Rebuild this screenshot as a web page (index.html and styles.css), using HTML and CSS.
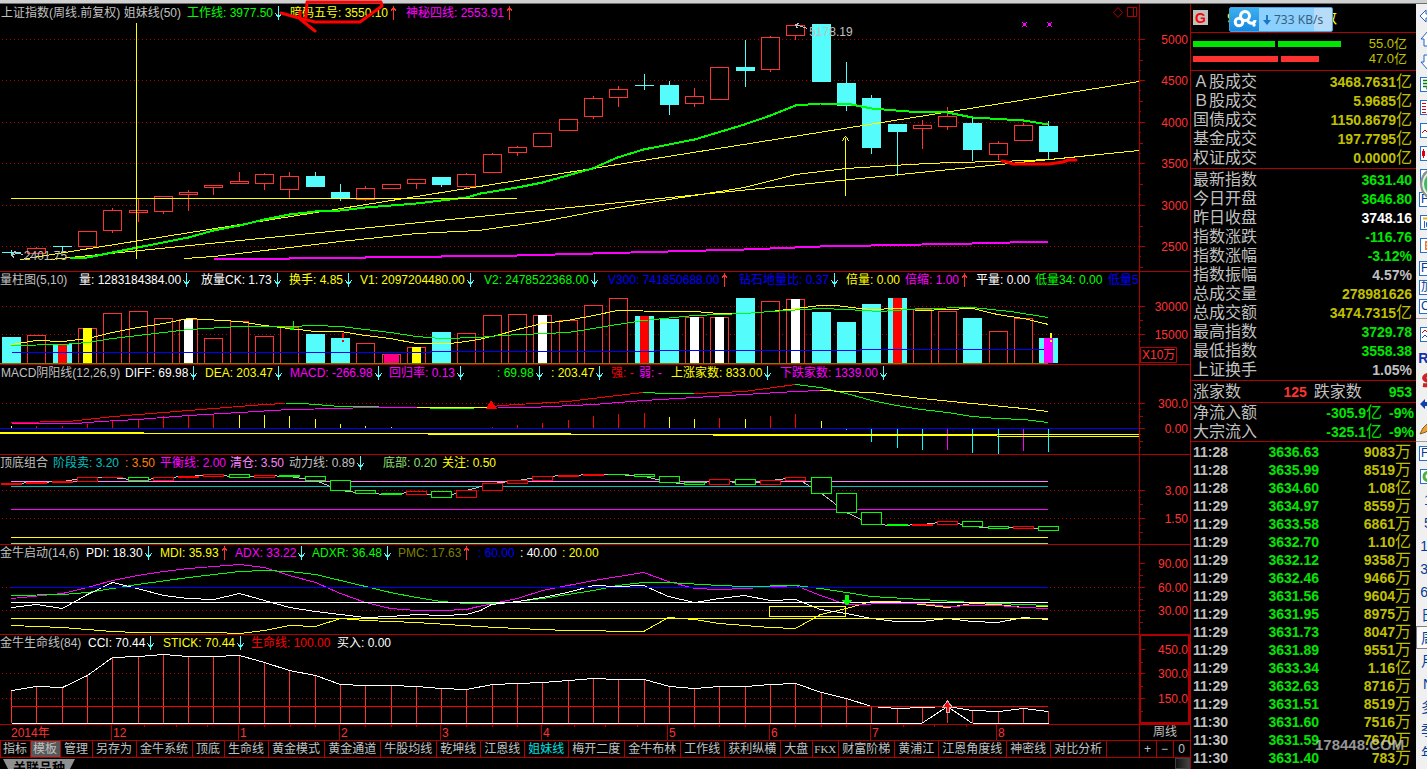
FILE: index.html
```html
<!DOCTYPE html>
<html lang="zh-CN">
<head>
<meta charset="utf-8">
<title>上证指数 周线</title>
<link rel="stylesheet" href="styles.css">
</head>
<body>
<svg class="defs" aria-hidden="true">
  <symbol id="down" viewBox="0 0 7 14"><path d="M3.5 0V14M.5 7.500l3 4.500l3-4.500M2 9.500h3" fill="none" stroke="#54fcfc"/></symbol>
  <symbol id="up" viewBox="0 0 7 14"><path d="M3.500 0V14M.5 5.500l3-4.500l3 4.500M2 3.500h3" fill="none" stroke="#ff3232"/></symbol>
</svg>
<div class="strip"></div>
<div class="app">
  <main class="charts">
    <section class="panel price">
      <header class="legend l1">
        <span class="gray">上证指数(周线.前复权) 姐妹线(50)</span>
        <span class="green">工作线: 3977.50<svg class="arr"><use href="#down"/></svg></span>
        <span class="yellow">暗码五号: 3550.10<svg class="arr"><use href="#up"/></svg></span>
        <span class="magenta">神秘四线: 2553.91<svg class="arr"><use href="#up"/></svg></span>
      </header>
      <svg class="plot" id="p1" viewBox="0 22 1139 249" preserveAspectRatio="none"></svg>
      <svg class="axis" id="a1" viewBox="1139 4 51 267"></svg>
      <span class="mark low">2401.75</span>
      <span class="mark high">5178.19</span>
      <svg class="tools" viewBox="0 0 26 16"><path d="M5 3.500L9.500 8.500L5 13.500L.5 8.500Z" shape-rendering="auto"/><path d="M14.500 3.500h9v9h-9zM20.500 3.500v9"/></svg>
      <svg class="scribble" viewBox="0 0 1139 180" preserveAspectRatio="none"><path d="M306 17L307 2H381L382 6L360 22H315L299 18L281 13M300 12V19L315 31M1002 161L1007 162L1013 164H1049L1063 162L1068 160L1076 160"/></svg>
    </section>

    <section class="panel volume">
      <header class="legend l2">
        <span class="gray">量柱图(5,10)</span>
        <span class="white">量: 1283184384.00<svg class="arr"><use href="#down"/></svg></span>
        <span class="white">放量CK: 1.73<svg class="arr"><use href="#down"/></svg></span>
        <span class="yellow">换手: 4.85<svg class="arr"><use href="#down"/></svg></span>
        <span class="yellow">V1: 2097204480.00<svg class="arr"><use href="#down"/></svg></span>
        <span class="green">V2: 2478522368.00<svg class="arr"><use href="#down"/></svg></span>
        <span class="blue">V300: 741850688.00<svg class="arr"><use href="#up"/></svg></span>
        <span class="blue">钻石地量比: 0.37<svg class="arr"><use href="#down"/></svg></span>
        <span class="yellow">倍量: 0.00</span>
        <span class="magenta">倍缩: 1.00<svg class="arr"><use href="#up"/></svg></span>
        <span class="white">平量: 0.00</span>
        <span class="green">低量34: 0.00</span>
        <span class="blue">低量5</span>
      </header>
      <svg class="plot" id="p2" viewBox="0 290 1139 74" preserveAspectRatio="none"></svg>
      <svg class="axis" id="a2" viewBox="1139 272 51 92"></svg>
    </section>

    <section class="panel">
      <header class="legend l3">
        <span class="gray">MACD阴阳线(12,26,9)</span>
        <span class="white">DIFF: 69.98<svg class="arr"><use href="#down"/></svg></span>
        <span class="yellow">DEA: 203.47<svg class="arr"><use href="#down"/></svg></span>
        <span class="magenta">MACD: -266.98<svg class="arr"><use href="#down"/></svg></span>
        <span class="magenta">回归率: 0.13<svg class="arr"><use href="#down"/></svg></span>
        <span class="green">: 69.98<svg class="arr"><use href="#down"/></svg></span>
        <span class="yellow">: 203.47<svg class="arr"><use href="#down"/></svg></span>
        <span class="red">强: -</span>
        <span class="magenta">弱: -</span>
        <span class="yellow">上涨家数: 833.00<svg class="arr"><use href="#down"/></svg></span>
        <span class="magenta">下跌家数: 1339.00<svg class="arr"><use href="#down"/></svg></span>
      </header>
      <svg class="plot" id="p3" viewBox="0 383 1139 71" preserveAspectRatio="none"></svg>
      <svg class="axis" id="a3" viewBox="1139 365 51 89"></svg>
    </section>

    <section class="panel">
      <header class="legend l4">
        <span class="gray">顶底组合</span>
        <span class="teal">阶段卖: 3.20</span>
        <span class="orange">: 3.50</span>
        <span class="magenta">平衡线: 2.00</span>
        <span class="pink">清仓: 3.50</span>
        <span class="gray">动力线: 0.89<svg class="arr"><use href="#down"/></svg></span>
        <span class="lime">底部: 0.20</span>
        <span class="yellow">关注: 0.50</span>
      </header>
      <svg class="plot" id="p4" viewBox="0 473 1139 71" preserveAspectRatio="none"></svg>
      <svg class="axis" id="a4" viewBox="1139 455 51 89"></svg>
    </section>

    <section class="panel">
      <header class="legend l5">
        <span class="gray">金牛启动(14,6)</span>
        <span class="white">PDI: 18.30<svg class="arr"><use href="#down"/></svg></span>
        <span class="yellow">MDI: 35.93<svg class="arr"><use href="#up"/></svg></span>
        <span class="magenta">ADX: 33.22<svg class="arr"><use href="#down"/></svg></span>
        <span class="green">ADXR: 36.48<svg class="arr"><use href="#down"/></svg></span>
        <span class="olive">PMC: 17.63<svg class="arr"><use href="#up"/></svg></span>
        <span class="blue">: 60.00</span>
        <span class="white">: 40.00</span>
        <span class="yellow">: 20.00</span>
      </header>
      <svg class="plot" id="p5" viewBox="0 563 1139 71" preserveAspectRatio="none"></svg>
      <svg class="axis" id="a5" viewBox="1139 545 51 89"></svg>
    </section>

    <section class="panel">
      <header class="legend l6">
        <span class="gray">金牛生命线(84)</span>
        <span class="white">CCI: 70.44<svg class="arr"><use href="#down"/></svg></span>
        <span class="yellow">STICK: 70.44<svg class="arr"><use href="#down"/></svg></span>
        <span class="red">生命线: 100.00</span>
        <span class="white">买入: 0.00</span>
      </header>
      <svg class="plot" id="p6" viewBox="0 653 1139 71" preserveAspectRatio="none"></svg>
      <svg class="axis" id="a6" viewBox="1139 635 51 89"></svg>
    </section>

    <div class="dates">
      <svg class="dateline" id="dates"></svg>
      <span class="period">周线</span>
    </div>

    <nav class="tabs">
      <button class="edge">指标</button><button class="on edge">模板</button><button>管理</button><button>另存为</button><button>金牛系统</button><button>顶底</button><button>生命线</button><button>黄金模式</button><button>黄金通道</button><button>牛股均线</button><button>乾坤线</button><button>江恩线</button><button class="current">姐妹线</button><button>梅开二度</button><button>金牛布林</button><button>工作线</button><button>获利纵横</button><button>大盘</button><button class="serif">FKX</button><button>财富阶梯</button><button>黄浦江</button><button>江恩角度线</button><button>神密线</button><button>对比分析</button>
      <span class="zoomers"><button>+</button><button>−</button><button>0</button></span>
    </nav>
    <div class="footer"><span class="related">关联品种</span><span class="thumb"></span></div>
  </main>

  <aside class="quote">
    <div class="title"><b class="g">G</b><span class="name">999999上证指数</span>
      <div class="speed">
        <span class="cloud"><svg viewBox="0 0 29 22"><g fill="none" stroke="#fff" stroke-width="3"><circle cx="15" cy="8" r="4.500"/><circle cx="9" cy="14" r="3.800"/><path d="M17 11c2 6 8 5 8 1"/></g><circle cx="24" cy="17" r="1.700" fill="#fff"/></svg></span>
        <svg class="dl" viewBox="0 0 8 10"><path d="M3 0h2v5h3L4 10L0 5h3z" fill="#1878c0"/></svg>733 KB/s
      </div>
    </div>
    <div class="bars">
      <div><i class="buy" style="width:82px"></i><i class="buy" style="width:63px"></i><span>55.0亿</span></div>
      <div><i class="sell" style="width:85px"></i><i class="sell" style="width:38px"></i><span>47.0亿</span></div>
    </div>
    <table class="stats amber">
      <tr><th>Ａ股成交</th><td>3468.7631<span>亿</span></td></tr>
      <tr><th>Ｂ股成交</th><td>5.9685<span>亿</span></td></tr>
      <tr><th>国债成交</th><td>1150.8679<span>亿</span></td></tr>
      <tr><th>基金成交</th><td>197.7795<span>亿</span></td></tr>
      <tr><th>权证成交</th><td>0.0000<span>亿</span></td></tr>
    </table>
    <table class="stats">
      <tr><th>最新指数</th><td class="dn">3631.40</td></tr>
      <tr><th>今日开盘</th><td class="dn">3646.80</td></tr>
      <tr><th>昨日收盘</th><td class="white">3748.16</td></tr>
      <tr><th>指数涨跌</th><td class="dn">-116.76</td></tr>
      <tr><th>指数涨幅</th><td class="dn">-3.12%</td></tr>
      <tr><th>指数振幅</th><td class="gray">4.57%</td></tr>
      <tr><th>总成交量</th><td class="am">278981626</td></tr>
      <tr><th>总成交额</th><td class="am">3474.7315<span>亿</span></td></tr>
      <tr><th>最高指数</th><td class="dn">3729.78</td></tr>
      <tr><th>最低指数</th><td class="dn">3558.38</td></tr>
      <tr><th>上证换手</th><td class="gray">1.05%</td></tr>
    </table>
    <table class="stats breadth">
      <tr><th>涨家数</th><td class="rise">125</td><th>跌家数</th><td class="dn">953</td></tr>
    </table>
    <table class="stats flow">
      <tr><th>净流入额</th><td class="dn">-305.9<span>亿</span></td><td class="dn pct">-9%</td></tr>
      <tr><th>大宗流入</th><td class="dn">-325.1<span>亿</span></td><td class="dn pct">-9%</td></tr>
    </table>
    <table class="ticks">
      <tr><td>11:28</td><td>3636.63</td><td>9083<span>万</span></td></tr>
      <tr><td>11:28</td><td>3635.99</td><td>8519<span>万</span></td></tr>
      <tr><td>11:28</td><td>3634.60</td><td>1.08<span>亿</span></td></tr>
      <tr><td>11:29</td><td>3634.97</td><td>8559<span>万</span></td></tr>
      <tr><td>11:29</td><td>3633.58</td><td>6861<span>万</span></td></tr>
      <tr><td>11:29</td><td>3632.70</td><td>1.10<span>亿</span></td></tr>
      <tr><td>11:29</td><td>3632.12</td><td>9358<span>万</span></td></tr>
      <tr><td>11:29</td><td>3632.46</td><td>9466<span>万</span></td></tr>
      <tr><td>11:29</td><td>3631.56</td><td>9604<span>万</span></td></tr>
      <tr><td>11:29</td><td>3631.95</td><td>8975<span>万</span></td></tr>
      <tr><td>11:29</td><td>3631.73</td><td>8047<span>万</span></td></tr>
      <tr><td>11:29</td><td>3631.89</td><td>9551<span>万</span></td></tr>
      <tr><td>11:29</td><td>3633.34</td><td>1.16<span>亿</span></td></tr>
      <tr><td>11:29</td><td>3632.63</td><td>8716<span>万</span></td></tr>
      <tr><td>11:29</td><td>3631.51</td><td>8519<span>万</span></td></tr>
      <tr><td>11:30</td><td>3631.60</td><td>7516<span>万</span></td></tr>
      <tr><td>11:30</td><td>3631.59</td><td>7670<span>万</span></td></tr>
      <tr><td>11:30</td><td>3631.40</td><td>783<span>万</span></td></tr>
    </table>
    <div class="site">178448.COM</div>
  </aside>

  <nav class="toolbar">
    <button aria-label="后退"><svg viewBox="0 0 18 18"><path d="M1 9L7 3V7H17V11H7V15Z" fill="#fff" stroke="#2060d0"/></svg></button>
    <button aria-label="上"><svg viewBox="0 0 18 18"><path d="M9 1L2 9H5V16H13V9H16Z" fill="#fff" stroke="#2060d0"/></svg></button>
    <button aria-label="下"><svg viewBox="0 0 18 18"><path d="M9 17L2 9H5V2H13V9H16Z" fill="#fff" stroke="#2060d0"/></svg></button>
    <button aria-label="列表"><svg class="box" viewBox="0 0 15 13"><path d="M2 2.500h4M2 5.500h4M2 8.500h4M8 2.500h4M8 5.500h4" stroke="#008000" stroke-width="1.500"/><circle cx="8" cy="10" r="2.500" fill="none" stroke="#777"/></svg></button>
    <button aria-label="报价"><svg class="box" viewBox="0 0 15 13"><path d="M1 2.500h4M1 5.500h4M1 8.500h4M1 11.500h4" stroke="#e00000"/><path d="M6 2.500h5M6 5.500h5M6 8.500h5M6 11.500h5" stroke="#008000"/></svg></button>
    <button aria-label="分时"><svg class="box" viewBox="0 0 15 13"><path d="M1 9L4 6L7 9L12 3" fill="none" stroke="#d00000"/></svg></button>
    <button aria-label="K线"><svg class="box" viewBox="0 0 15 13"><path d="M1 4h3v5H1zM2 2h1v9h-1z" fill="#e00000"/><path d="M6 3h4v8H6z" fill="#008000"/></svg></button>
    <button aria-label="信息"><svg class="box" viewBox="0 0 15 13"><path d="M3 3h8v7H3z" fill="none" stroke="#2060d0"/></svg></button>
    <button class="boxed">F10</button>
    <button aria-label="版面"><svg class="box" viewBox="0 0 15 13"><path d="M2 2.500h9" stroke="#f0b000" stroke-width="2"/><path d="M3.500 5v7M5.500 6.500h6v4h-6z" fill="none" stroke="#2060d0"/></svg></button>
    <button aria-label="资讯"><svg class="box" viewBox="0 0 15 13"><path d="M4 2h8v9H4z" fill="#f07830"/><path d="M5 5h6M5 8h6" stroke="#fff"/></svg></button>
    <button class="boxed">Fn</button>
    <button class="boxed">加</button>
    <button class="boxed">C</button>
    <hr>
    <button aria-label="走势"><svg class="box" viewBox="0 0 15 13"><path d="M1 5l3-3l3 3l3-3" fill="none" stroke="#d00000"/><path d="M1 10l3-3l3 3l3-3" fill="none" stroke="#2040d0"/></svg></button>
    <button class="rs">RS</button>
    <button aria-label="标记"><svg viewBox="0 0 18 18"><path d="M15 2C5 2 2 7 9 9C14 11 10 14 4 13" fill="none" stroke="#d02020" stroke-width="4"/></svg></button>
    <button aria-label="移动"><svg viewBox="0 0 18 18"><path d="M1 9L6 4V7H9V3H13V15H9V11H6V14Z" fill="#1040b0"/></svg></button>
    <button aria-label="画线"><svg viewBox="0 0 18 18"><path d="M1 16L4 10L13 1L16 5L7 14Z" fill="#f0a030" stroke="#806020"/></svg></button>
    <hr>
    <button class="boxed">F</button>
    <button aria-label="刷新"><svg class="box" viewBox="0 0 15 13"><circle cx="7" cy="6.500" r="4" fill="none" stroke="#50b040" stroke-width="3"/></svg></button>
    <button>1</button><button>5</button><button>15</button><button>30</button><button>60</button><button>日</button><button class="sel">周</button><button>月</button><button>N</button><button>多</button><button>季</button><button>年</button>
    <span class="ball"></span>
  </nav>
</div>
<script src="chart.js"></script>
</body>
</html>
```
FILE: styles.css
```css
* { box-sizing: border-box; }
body {
  margin: 0;
  height: 100vh;
  overflow: hidden;
  background: #000;
  color: #c0c0c0;
  font: 12px/18px "Liberation Sans", "Noto Sans CJK SC", sans-serif;
}
button { font: inherit; color: inherit; background: none; border: 0; padding: 0; margin: 0; }
.defs { position: absolute; width: 0; height: 0; }
.strip { height: 4px; background: #d0d0d0; border-bottom: 1px solid #707070; }
.app { display: flex; height: calc(100vh - 4px); }

.charts { flex: 1; min-width: 0; display: flex; flex-direction: column; }
.panel {
  position: relative;
  flex: none;
  display: grid;
  grid-template-columns: minmax(0, 1fr) 51px;
  grid-template-rows: 18px auto;
  border-top: 1px solid #b00000;
}
.panel.price { border-top: 0; }
.legend { display: grid; white-space: nowrap; overflow: hidden; line-height: 16px; }
.price .legend { line-height: 18px; }
.legend span { min-width: 0; }
.l1 { grid-template-columns: 186px 103px 116px 1fr; padding-left: 1px; }
.l2 { grid-template-columns: 79px 122px 88px 71px 124px 124px 131px 107px 59px 71px 59px 73px 1fr; }
.l3 { grid-template-columns: 124px 80px 85px 99px 108px 54px 60px 28px 32px 109px 1fr; padding-left: 1px; }
.l4 { grid-template-columns: 53px 72px 35px 70px 59px 94px 59px 1fr; }
.l5 { grid-template-columns: 86px 74px 75px 77px 86px 80px 42px 42px 1fr; }
.l6 { grid-template-columns: 88px 75px 88px 86px 1fr; }
.arr { width: 7px; height: 14px; margin: 0 0 0 2px; vertical-align: -3px; shape-rendering: crispEdges; }
.plot { grid-column: 1; grid-row: 2; display: block; width: 100%; height: 71px; shape-rendering: crispEdges; }
.price .plot { height: 249px; }
.volume .plot { height: 74px; }
.axis { grid-column: 2; grid-row: 1 / 3; width: 51px; height: 100%; display: block; shape-rendering: crispEdges; }
.axis text, .dateline text { font: 12px "Liberation Sans", "Noto Sans CJK SC", sans-serif; fill: #ff3232; }
.mark { position: absolute; line-height: 14px; }
.mark.low { left: 2%; top: 245px; }
.mark.high { left: 68%; top: 21px; }
.tools { position: absolute; right: 51px; top: 0; width: 26px; height: 16px; fill: none; stroke: #b00000; shape-rendering: crispEdges; }
.scribble { position: absolute; left: 0; top: -4px; width: calc(100% - 51px); height: 180px; fill: none; stroke: #ff0000; stroke-width: 3; stroke-linejoin: round; stroke-linecap: round; }

.gray { color: #c0c0c0; }
.white { color: #fff; }
.green { color: #00ff00; }
.yellow { color: #ffff00; }
.magenta { color: #ff00ff; }
.blue { color: #0000ff; }
.red { color: #ff0000; }
.teal { color: #00c0c0; }
.orange { color: #ff8000; }
.pink { color: #ff80ff; }
.lime { color: #90e070; }
.olive { color: #808000; }

.dates { display: flex; height: 16px; flex: none; border-top: 1px solid #b00000; }
.dateline { flex: 1; min-width: 0; height: 15px; shape-rendering: crispEdges; }
.period { width: 51px; border-left: 1px solid #b00000; text-align: center; line-height: 15px; }

.tabs { display: flex; flex: none; height: 18px; border: 1px solid #b00000; border-right: 0; line-height: 16px; overflow: hidden; }
.tabs button { flex: none; border-right: 1px solid #b00000; padding: 0 4px 0 3px; white-space: nowrap; }
.tabs .edge { padding: 0 3px 0 2px; }
.tabs .on { background: #585858; }
.tabs .current { color: #00e0e0; }
.tabs .serif { font-family: "Liberation Serif", serif; font-size: 11px; padding: 0 2px 0 1px; }
.zoomers { display: flex; margin-left: auto; width: 51px; border-left: 1px solid #b00000; }
.zoomers button { flex: 1; }
.zoomers button:last-child { border-right: 0; }
.footer { display: flex; justify-content: space-between; flex: 1; overflow: hidden; }
.related {
  width: 72px; height: 20px; margin: 1px 0 0 3px; text-align: center;
  background: #909090; color: #000; font-size: 13px; font-weight: bold; line-height: 18px;
  clip-path: polygon(0 0, 100% 0, 86% 100%, 14% 100%);
}
.thumb { width: 15px; border: 1px solid #404040; background: linear-gradient(90deg, #111, #444); }

.quote { position: relative; width: 226px; flex: none; border-left: 1px solid #b00000; }
.title { position: relative; display: flex; height: 29px; border-bottom: 1px solid #b00000; padding: 6px 0 0 2px; }
.g { width: 15px; height: 15px; background: #c0c0c0; color: #f00; font: bold 14px/16px "Liberation Sans", sans-serif; text-align: center; }
.name { margin-left: 19px; font-size: 15px; line-height: 16px; color: #ffff00; white-space: nowrap; }
.speed {
  position: absolute; left: 38px; top: 3px; width: 104px; height: 25px; display: flex; align-items: center;
  border: 1px solid #4aa0e0; border-radius: 2px; background: linear-gradient(90deg, #8cd0ff 82%, #b8dcf8 82%);
  color: #3a6078; font: 12px/22px "Noto Sans", sans-serif; white-space: nowrap;
}
.cloud { width: 29px; height: 100%; background: linear-gradient(#3cb0f0, #1888e0); }
.cloud svg { width: 29px; height: 22px; }
.dl { width: 8px; height: 10px; margin: 0 3px 0 4px; }
.bars { height: 38px; border-bottom: 1px solid #b00000; padding: 3px 9px 0 2px; font-size: 13px; color: #c0c000; }
.bars div { display: flex; gap: 3px; align-items: center; height: 15px; }
.bars i { height: 6px; }
.bars span { margin-left: auto; line-height: 15px; }
.buy { background: #00e600; }
.sell { background: #ff3232; }

table { width: 100%; border-collapse: separate; border-spacing: 0; table-layout: fixed; }
th { font-weight: normal; font-size: 16px; line-height: 16px; text-align: left; padding: 0; white-space: nowrap; }
td { font-weight: bold; font-size: 14px; line-height: 16px; padding: 0; text-align: right; white-space: nowrap; }
td span { font-size: 16px; font-weight: normal; line-height: 14px; }
.stats { border-bottom: 1px solid #b00000; padding: 1px 4px 1px 2px; }
.stats tr { height: 19px; }
.stats th { width: 68px; }
.amber td, .am { color: #c0c000; }
.dn { color: #00e600; }
.rise { color: #ff3232; }
.breadth th:first-child { width: 64px; }
.breadth th:nth-child(3) { width: 56px; padding-left: 7px; }
.breadth td { width: 42px; }
.flow { padding: 0 2px 0 2px; }
.flow .pct { width: 32px; }
.ticks { padding: 1px 5px 0 2px; }
.ticks tr { height: 18px; }
.ticks td:first-child { text-align: left; color: #c0c0c0; width: 60px; }
.ticks td:nth-child(2) { color: #00e600; width: 66px; }
.ticks td:last-child { color: #c0c000; }
.site { position: absolute; left: 124px; top: 729px; font: bold 15px/24px "Liberation Sans", sans-serif; color: rgba(200, 200, 200, .75); }

.toolbar { position: relative; flex: none; width: 11px; overflow: hidden; background: #f0f0f0; color: #003c96; font-size: 14px; }
.toolbar button { display: flex; align-items: center; justify-content: center; width: 24px; height: 23px; }
.toolbar svg { width: 18px; height: 18px; }
.toolbar .box { width: 17px; height: 15px; background: #fff; border: 1px solid #2070d0; }
.toolbar .boxed { justify-content: flex-start; width: 18px; height: 15px; margin: 4px 0 4px 3px; padding-left: 1px; border: 1px solid #2070d0; background: #fff; font-size: 12px; line-height: 13px; overflow: hidden; }
.toolbar .rs { font-weight: bold; color: #1030b0; }
.toolbar .sel { background: #fafafa; border: 1px solid #808080; }
.toolbar hr { width: 24px; margin: 3px 0 4px; border: 0; border-top: 1px solid #a0a0a0; }
.ball { position: absolute; left: 4px; top: 163px; width: 34px; height: 34px; border-radius: 50%; border: 2px solid #909090; background: #40b860; box-shadow: inset 0 0 0 2px #e0f0e0; }
```
FILE: chart.js
```js
const NS = 'http://www.w3.org/2000/svg';
const RED = '#ff3232', CYAN = '#54fcfc', LINE = '#b00000';
const X = i => Math.round(11 + 25.3 * i);
const el = id => document.getElementById(id);

function add(svg, tag, attrs, text) {
  const n = document.createElementNS(NS, tag);
  for (const k in attrs) n.setAttribute(k, attrs[k]);
  if (text) n.textContent = text;
  svg.appendChild(n);
  return n;
}
const fill = (s, x, y, w, h, c) => add(s, 'rect', { x, y, width: w, height: h, fill: c });
const frame = (s, x, y, w, h, c, f) => add(s, 'rect', { x: x + 0.5, y: y + 0.5, width: w - 1, height: h - 1, fill: f || 'none', stroke: c });
function poly(s, pts, c, w) {
  const a = pts.trim().split(' ').map(p => p.split(',').map(v => +v + 0.5).join(','));
  add(s, 'polyline', { points: a.join(' '), fill: 'none', stroke: c, 'stroke-width': w || 1 });
}
function grid(s, ys) {
  ys.forEach(y => add(s, 'line', { x1: 2, x2: 1139, y1: y + 0.5, y2: y + 0.5, stroke: LINE, 'stroke-dasharray': '1 3' }));
}
function axis(id, y0, h, labels, step) {
  const s = el(id);
  fill(s, 1139, y0, 1, h, LINE);
  labels.forEach(([y, t]) => {
    fill(s, 1140, y, 5, 1, LINE);
    add(s, 'text', { x: 1188, y: y + 5, 'text-anchor': 'end' }, t);
    [0.25, 0.5, 0.75].forEach(f => fill(s, 1140, Math.round(y + step * f), f === 0.5 ? 3 : 1, 1, LINE));
  });
  return s;
}

/* price: colour, high, body top, body bottom, low */
const candles = `c250,252,252,255 r247,248,253,253 c246,246,246,251 r231,231,246,246 r208,210,230,232 r198,210,212,221
r196,196,211,213 r190,192,194,210 r185,185,187,194 r172,181,183,183 r173,174,183,189 r172,176,189,197 c172,176,186,186
c184,192,197,200 r186,188,199,200 r184,184,188,188 r179,179,183,188 c177,177,184,186 r173,174,186,187 r153,154,172,172
r146,147,152,155 r133,133,146,146 r119,119,130,130 r96,98,116,118 r86,89,97,106 c74,85,85,89 c81,85,104,114
r88,96,103,106 r67,67,99,99 c40,67,70,86 r36,37,69,71 r24,25,35,39 c24,24,81,81 c62,83,105,110 c95,98,147,153
c124,124,131,175 r120,125,128,148 r107,116,126,129 c118,123,149,160 r141,143,154,159 r123,125,140,140 c121,126,151,158`.split(/\s+/);
let s = el('p1');
grid(s, [39, 80, 122, 163, 205, 246]);
candles.forEach((d, i) => {
  const [hi, t, b, lo] = d.slice(1).split(',').map(Number), x = X(i), c = d[0] === 'c' ? CYAN : RED;
  fill(s, x, hi, 1, lo - hi + 1, c);
  if (d[0] === 'c') fill(s, x - 9, t, 19, b - t + 1, c);
  else frame(s, x - 9, t, 19, b - t + 1, c, '#000');
});
poly(s, '213,258 289,258 290,257 365,257 366,256 441,256 442,255 517,255 593,253 668,251 744,249 820,246 871,245 972,243 1048,241', '#f0f', 2);
poly(s, '20,259 1139,81', '#ff0');
poly(s, '50,259 1139,150', '#ff0');
poly(s, '184,258 213,256 340,241 416,233 478,230 542,221 617,207 694,195 744,187 795,174 846,168 908,164 950,162 1000,161 1048,159', '#ff0');
poly(s, '70,258 87,257 137,247 188,237 213,230 239,225 264,219 289,214 315,211 340,210 365,207 416,203 466,197 480,193 517,187 542,182 592,168 617,157 643,149 694,139 744,124 770,115 795,105 820,103 846,103 871,108 908,111 947,112 972,117 1023,120 1048,124', '#0f0', 2);
poly(s, '136,22 136,258', '#ff0');
poly(s, '10,198 516,198', '#ff0');
poly(s, '845,137 845,195', '#ff0');
poly(s, '842,141 843,138 845,136 847,138 848,141', '#ff0');
poly(s, '23,254 17,253 12,254', '#c0c0c0');
poly(s, '16,250 11,254 14,258', '#c0c0c0');
poly(s, '807,28 795,24', '#c0c0c0');
poly(s, '799,23 795,24 797,28', '#c0c0c0');
[1024, 1049].forEach(x => {
  fill(s, x - 1, 23, 3, 3, '#f0f');
  [[-2, 22], [2, 22], [-2, 26], [2, 26]].forEach(([dx, y]) => fill(s, x + dx, y, 1, 1, '#f0f'));
});
axis('a1', 4, 267, [[39, '5000'], [80, '4500'], [122, '4000'], [163, '3500'], [205, '3000'], [246, '2500']], 41);

/* volume: colour, top, core colour */
const cores = { r: '#f00', y: '#ff0', w: '#fff', p: '#ff0080', m: '#f0f' };
s = el('p2');
grid(s, [306, 334]);
'c337 r335 c344r r328y r313 r311 r318 r319w r338 r321 r336 r327 c334 c338 r343 r354p r347y c332 r333 r315 r314 r315w r320 r305 r298 c316r c319 r317w r317w c298 r301 r299w c312 c322 c304 c298r r309 r311 c318 r331 r318 c338m'
  .split(' ').forEach((d, i) => {
    const y = +d.slice(1, 4), x = X(i), k = d[4];
    if (d[0] === 'c') fill(s, x - 9, y, 19, 363 - y, CYAN);
    else frame(s, x - 9, y, 19, 365 - y, RED, '#000');
    if (k === 'p') fill(s, x - 7, y, 15, 363 - y, cores.p);
    else if (k) fill(s, x - 4, y, 9, 363 - y, cores[k]);
  });
poly(s, '11,344 36,340 62,341 87,338 112,332 137,327 163,323 188,318 239,321 264,325 289,328 315,331 340,331 365,335 390,338 416,343 450,343 466,341 478,339 500,334 517,329 542,323 567,320 593,315 617,310 668,311 694,311 719,313 744,313 770,311 795,308 820,305 835,305 860,308 871,309 896,308 921,310 972,308 997,314 1023,318 1048,324', '#ff0');
poly(s, '11,345 62,344 87,342 112,338 163,332 188,329 239,326 289,326 315,325 340,326 365,329 390,332 416,336 441,338 478,337 500,335 567,332 593,328 617,324 643,320 694,315 744,313 770,311 820,308 846,309 880,311 921,308 972,307 1010,311 1048,317', '#0f0');
poly(s, '11,352 430,352 430,351 655,351 655,350 860,350 860,349 1043,349', '#00f');
fill(s, 0, 363, 1048, 1, '#808000');
fill(s, 293, 321, 1, 9, '#0f0');
fill(s, 290, 328, 4, 2, '#0f0');
fill(s, 342, 333, 2, 5, '#f00');
fill(s, 342, 340, 2, 2, '#f00');
fill(s, 1050, 333, 2, 5, '#ff0');
fill(s, 1050, 340, 2, 2, '#ff0');
s = axis('a2', 272, 92, [[306, '30000'], [334, '15000']], 28);
frame(s, 1140, 347, 37, 16, LINE, '#000');
add(s, 'text', { x: 1142, y: 359 }, 'X10万');

/* MACD */
s = el('p3');
grid(s, [403]);
'y426 r426 r426 r424 r421 r419 r416 r415 r414 y415 y415 y416 y419 y424 y426 y427 - - - r427 r425 r423 r420 r416 r414 r413 y417 y419 r418 y419 r416 r414 y421 c429 c441 c447 c449 m449 c452 c453 m450 c451'
  .split(' ').forEach((d, i) => {
    if (d === '-') return;
    const y = +d.slice(1), c = { y: '#ff0', r: '#f00', c: '#00ffff', m: '#f0f' }[d[0]];
    if (y < 428) fill(s, X(i), y, 1, 428 - y, c); else fill(s, X(i), 429, 1, y - 428, c);
  });
fill(s, 0, 428, 1139, 1, '#00f');
fill(s, 0, 432, 144, 2, '#ff0');
fill(s, 144, 433, 284, 1, '#ff0');
fill(s, 428, 433, 143, 2, '#ff0');
fill(s, 571, 434, 142, 1, '#ff0');
fill(s, 713, 434, 284, 2, '#ff0');
fill(s, 997, 434, 142, 1, '#ff0');
fill(s, 997, 436, 142, 1, '#ff0');
poly(s, '11,422 68,421 113,416 163,412 213,408 264,404 285,403', '#f00');
poly(s, '285,403 302,403 340,406 378,406', '#0f0');
poly(s, '11,423 75,423 100,421 137,419 188,415 239,412 289,409 340,408 365,407 416,407', '#f0f');
poly(s, '416,407 487,407', '#ff0');
poly(s, '429,408 473,408', '#0f0');
poly(s, '487,407 500,405 567,401 617,395 643,392', '#f00');
poly(s, '643,392 665,393 694,393', '#0f0');
poly(s, '694,393 744,391 795,384', '#f00');
poly(s, '795,384 820,387 846,393 871,400 896,405 921,409 947,412 972,416 997,418 1023,419 1048,422', '#0f0');
poly(s, '497,407 530,407 593,404 643,400 694,397 744,394 795,391 820,390', '#f0f');
poly(s, '820,390 871,392 921,398 972,403 1023,408 1048,411', '#ff0');
add(s, 'path', { d: 'M491 400L497 409H486Z', fill: '#f00' });
axis('a3', 365, 89, [[403, '300.0'], [428, '0.00']], 25);

/* top/bottom boxes */
s = el('p4');
grid(s, [490, 518]);
[[481, '#ff80ff'], [486, '#00c0c0'], [509, '#f0f'], [537, '#ff0'], [543, '#90e070']].forEach(([y, c]) => fill(s, 11, y, 1037, 1, c));
const boxes = 'r483,484 r482,483 r481,482 r477,481 r477,477 g477,480 r477,480 r476,477 r474,476 g474,477 r475,477 g475,476 g476,480 g480,490 g490,493 g493,494 r491,494 g491,497 r490,497 r483,490 r480,483 r476,480 r475,476 r474,475 g474,474 g474,476 g476,482 g482,484 r479,484 g479,484 r480,484 r477,480 g477,493 g493,512 g512,524 g524,525 r524,525 r521,524 g521,526 g526,528 r526,528 g526,530'
  .split(' ').map(d => [d[0], ...d.slice(1).split(',').map(Number)]);
poly(s, boxes.map(([c, t, b], i) => X(i) + ',' + (c === 'r' ? t : b)).join(' '), '#c0c0c0');
boxes.forEach(([c, t, b], i) => {
  const col = c === 'r' ? '#f00' : '#0f0';
  if (b - t < 2) fill(s, X(i) - 10, t, 21, b - t + 1, col); else frame(s, X(i) - 10, t, 21, b - t + 1, col, '#000');
});
axis('a4', 455, 89, [[490, '3.00'], [518, '1.50']], 28);

/* DMI */
s = el('p5');
grid(s, [587, 610]);
poly(s, '11,625 62,627 112,631 137,632 213,632 239,633 264,630 289,625 315,626 340,618 365,620 416,622 478,626 517,628 567,630 643,631 668,617 694,619 719,623 770,627 795,628 820,614 846,608 871,601 896,601 921,604 947,607 972,603 997,604 1023,607 1048,606', '#ff0');
poly(s, '11,598 62,593 87,587 112,580 137,575 163,571 188,568 239,564 264,567 289,575 315,582 340,593 365,602 390,608 416,610 441,610 466,609 478,606 517,598 542,590 593,580 643,572 668,581 694,588 719,589 744,588 795,585 820,595 846,604 896,603 921,603 947,606 972,605 997,605 1023,607 1048,608', '#f0f');
poly(s, '11,595 62,594 87,592 112,588 137,584 188,577 239,571 264,570 289,571 315,574 340,580 365,586 390,592 416,597 441,601 466,603 500,603 542,598 567,594 593,590 617,585 643,582 668,582 719,585 744,586 795,585 820,588 846,592 871,596 921,599 972,602 1023,604 1048,605', '#0f0');
poly(s, '11,607 36,604 62,608 87,594 112,582 137,588 163,595 188,598 213,599 239,593 264,600 289,607 315,611 340,614 365,617 390,616 416,614 441,615 466,614 480,610 491,604 517,601 542,597 567,592 593,585 617,586 643,585 668,596 694,602 719,598 744,595 770,600 795,599 820,609 846,613 871,618 896,621 921,621 947,618 972,621 997,622 1023,617 1048,619', '#fff');
fill(s, 11, 587, 1037, 1, '#00f');
fill(s, 11, 602, 1037, 1, '#fff');
fill(s, 11, 618, 1037, 1, '#ff0');
frame(s, 769, 606, 77, 11, '#ff0');
add(s, 'path', { d: 'M845 595h4v5h3L847 606L842 600h3z', fill: '#0f0' });
axis('a5', 545, 89, [[563, '90.00'], [587, '60.00'], [610, '30.00']], 24);

/* CCI */
s = el('p6');
grid(s, [673, 698]);
const cci = [690, 686, 687, 675, 657, 656, 654, 656, 656, 655, 662, 670, 675, 684, 685, 685, 686, 688, 689, 684, 683, 682, 680, 678, 679, 679, 686, 688, 686, 686, 684, 683, 692, 698, 706, 708, 707, 706, 710, 711, 708, 711];
cci.forEach((y, i) => fill(s, X(i), y, 1, 723 - y, RED));
poly(s, cci.map((y, i) => X(i) + ',' + y).join(' '), '#fff');
fill(s, 11, 706, 1037, 1, '#f00');
poly(s, '11,723 921,723', '#fff');
poly(s, '921,723 947,706 972,723', '#fff');
poly(s, '972,723 1048,723', '#fff');
add(s, 'path', { d: 'M947.5 701L952 707h-3v5h-3v-5h-3z', fill: '#f00', stroke: '#c0c0c0' });
s = axis('a6', 635, 89, [[649, '450.0'], [673, '300.0'], [698, '150.0']], 25);
add(s, 'rect', { x: 1140, y: 635, width: 49, height: 88, fill: 'none', stroke: LINE, 'stroke-width': 2 });

/* month marks */
s = el('dates');
add(s, 'text', { x: 11, y: 12 }, '2014年');
const months = [[112, '12', 4], [239, '1', 4], [340, '2', 4], [441, '3', 4], [542, '4', 4], [668, '5', 4], [770, '6', 4], [871, '7', 4], [997, '8', 0]];
months.forEach(([x, t, n], i) => {
  fill(s, x - 1, 0, 1, 15, LINE);
  add(s, 'text', { x: x + 1, y: 12 }, t);
  for (let k = 1; k < n; k++) fill(s, Math.round(x + (months[i + 1][0] - x) * k / n), 0, 1, 2, LINE);
});
```
